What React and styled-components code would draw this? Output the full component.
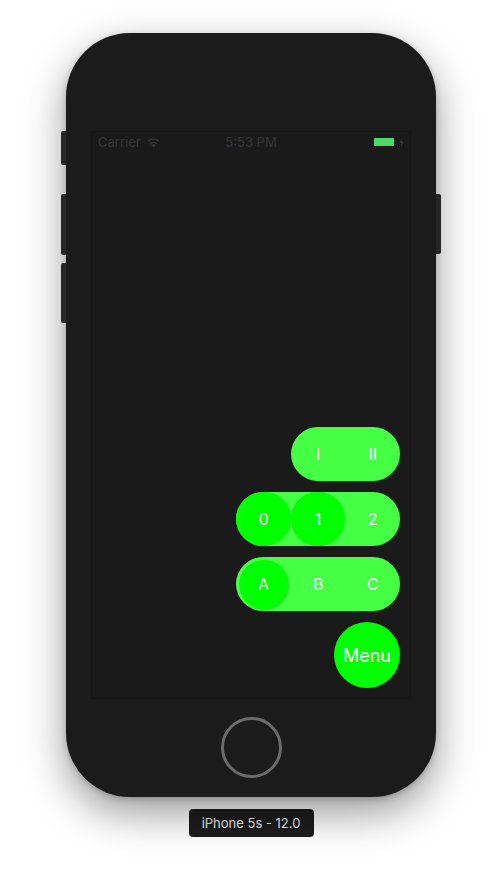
import React from "react";
import styled, { createGlobalStyle } from "styled-components";

const GlobalStyle = createGlobalStyle`
  html, body {
    margin: 0;
    padding: 0;
    background: #ffffff;
  }
  body {
    font-family: "Inter", "Liberation Sans", sans-serif;
  }
`;

const Page = styled.div`
  display: flex;
  flex-direction: column;
  align-items: center;
  padding-top: 33px;
  gap: 12px;
  width: 502px;
  height: 879px;
  box-sizing: border-box;
  overflow: hidden;
`;

const Phone = styled.div`
  position: relative;
  width: 370px;
  height: 764px;
  box-sizing: border-box;
  background: #1b1b1b;
  border-radius: 64px;
  box-shadow: 0 16px 42px rgba(0, 0, 0, 0.4), 0 2px 6px rgba(0, 0, 0, 0.2);
  display: flex;
  flex-direction: column;
  align-items: center;
  padding-top: 98px;
  gap: 18px;
`;

const SideKey = styled.div`
  position: absolute;
  top: ${(p) => p.top}px;
  ${(p) => (p.right ? "right: -5px;" : "left: -5px;")}
  width: 5px;
  height: ${(p) => p.h}px;
  background: #262626;
  border-radius: ${(p) => (p.right ? "0 2px 2px 0" : "2px 0 0 2px")};
`;

const Screen = styled.div`
  width: 320px;
  height: 568px;
  box-sizing: border-box;
  background: #1a1a1a;
  border: 1px solid #161616;
  display: flex;
  flex-direction: column;
`;

const StatusBar = styled.div`
  height: 20px;
  display: grid;
  grid-template-columns: 1fr auto 1fr;
  align-items: center;
  padding: 0 6px;
  font-size: 13px;
  color: #363636;
`;

const Left = styled.div`
  display: flex;
  align-items: center;
  gap: 5px;
`;

const Right = styled.div`
  display: flex;
  align-items: center;
  justify-content: flex-end;
  gap: 5px;
`;

const Battery = styled.div`
  width: 20px;
  height: 8px;
  border-radius: 1px;
  background: #4cd964;
`;

const Controls = styled.div`
  flex: 1;
  display: flex;
  flex-direction: column;
  justify-content: flex-end;
  align-items: flex-end;
  padding: 0 10px 10px 0;
  gap: 11px;
`;

const Pill = styled.div`
  display: flex;
  height: 54px;
  border-radius: 27px;
  background: #44ff44;
`;

const Cell = styled.div`
  position: relative;
  width: 54.6px;
  height: 54px;
  display: flex;
  align-items: center;
  justify-content: center;
  color: #ffffff;
  font-size: 16px;
`;

const Knob = styled.div`
  position: absolute;
  inset: ${(p) => p.inset || 0}px;
  border-radius: 50%;
  background: #00ff00;
  box-shadow: ${(p) =>
    p.raised
      ? "-2px 0 0 rgba(120, 255, 120, 0.35), 1px 1px 3px rgba(0, 120, 0, 0.35)"
      : "0 0 1px rgba(0, 140, 0, 0.3)"};
`;

const Label = styled.span`
  position: relative;
`;

const MenuButton = styled.div`
  width: 66px;
  height: 66px;
  border-radius: 50%;
  background: #00ff00;
  color: #ffffff;
  font-size: 18px;
  display: flex;
  align-items: center;
  justify-content: center;
`;

const HomeButton = styled.div`
  width: 61px;
  height: 61px;
  box-sizing: border-box;
  border-radius: 50%;
  border: 3px solid #6b6b6b;
`;

const DeviceTag = styled.div`
  width: 125px;
  height: 28px;
  border-radius: 4px;
  background: #1d1d1d;
  color: #ececec;
  font-size: 13px;
  display: flex;
  align-items: center;
  justify-content: center;
`;

// solid wifi fan: dot wedge plus two arcs
const Wifi = () => (
  <svg width="15" height="11" viewBox="0 0 15 11">
    <path d="M7.5 10.5 L5.2 8 A3.3 3.3 0 0 1 9.8 8 Z" fill="#363636" />
    <path d="M3.6 6.3 A5.6 5.6 0 0 1 11.4 6.3 L10.4 7.4 A4.1 4.1 0 0 0 4.6 7.4 Z" fill="#363636" />
    <path d="M1.2 3.9 A9 9 0 0 1 13.8 3.9 L12.8 5 A7.5 7.5 0 0 0 2.2 5 Z" fill="#363636" />
  </svg>
);

const Bolt = () => (
  <svg width="5" height="9" viewBox="0 0 5 9">
    <path d="M3 0 L0.5 5 H2.3 L1.8 9 L4.5 3.8 H2.7 Z" fill="#363636" />
  </svg>
);

const rows = [
  { cells: ["I", "II"], knobs: [] },
  { cells: ["0", "1", "2"], knobs: [0, 1] },
  { cells: ["A", "B", "C"], knobs: [0], raised: true },
];

export default function App() {
  return (
    <>
      <GlobalStyle />
      <Page>
        <Phone>
          <SideKey top={98} h={34} />
          <SideKey top={161} h={61} />
          <SideKey top={230} h={60} />
          <SideKey right top={161} h={60} />
          <Screen>
            <StatusBar>
              <Left>
                Carrier <Wifi />
              </Left>
              <span>5:53 PM</span>
              <Right>
                <Battery />
                <Bolt />
              </Right>
            </StatusBar>
            <Controls>
              {rows.map((row, i) => (
                <Pill key={i}>
                  {row.cells.map((c, j) => (
                    <Cell key={c}>
                      {row.knobs.includes(j) && (
                        <Knob inset={row.raised ? 2.5 : 0} raised={row.raised} />
                      )}
                      <Label>{c}</Label>
                    </Cell>
                  ))}
                </Pill>
              ))}
              <MenuButton>Menu</MenuButton>
            </Controls>
          </Screen>
          <HomeButton />
        </Phone>
        <DeviceTag>iPhone 5s - 12.0</DeviceTag>
      </Page>
    </>
  );
}
